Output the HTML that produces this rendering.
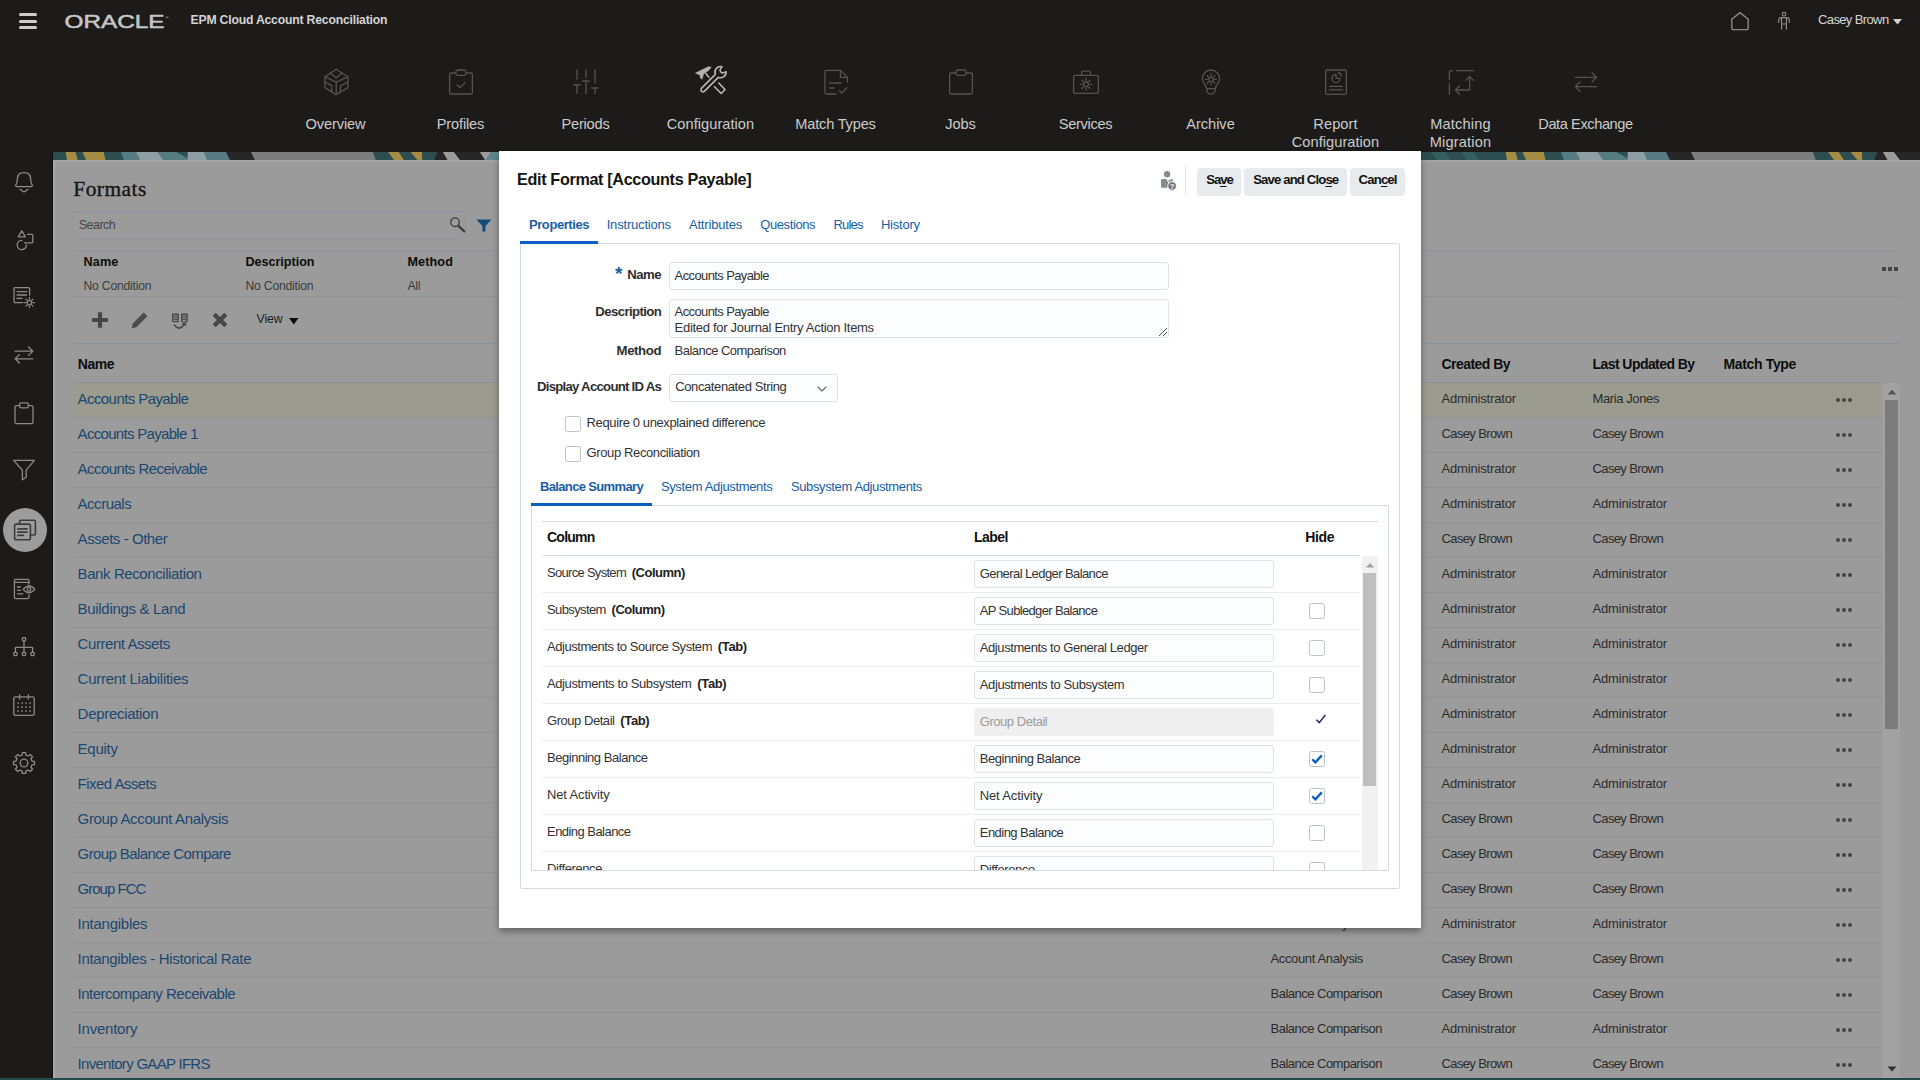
<!DOCTYPE html>
<html lang="en">
<head>
<meta charset="utf-8">
<title>EPM Cloud Account Reconciliation</title>
<style>
*{box-sizing:border-box;margin:0;padding:0}
html,body{width:1920px;height:1080px;overflow:hidden;background:#9b9b9b;font-family:"Liberation Sans",sans-serif;}
body{position:relative}
.abs{position:absolute}
svg{overflow:visible}
.t{position:absolute;white-space:pre;line-height:1;}
/* ===== header ===== */
#hdr{position:absolute;left:0;top:0;width:1920px;height:152px;background:#1d1b1a}
#side{position:absolute;left:0;top:152px;width:53px;height:928px;background:#1d1b1a}
#banner{position:absolute;left:53px;top:152px;width:1867px;height:8px;background:#2c4e50;overflow:hidden}
#botline{position:absolute;left:0;top:1078px;width:1920px;height:2px;background:#23494c}

#hdr .t{color:#cbcbcb}
.ni{fill:none;stroke:#555352;stroke-width:1.3;stroke-linecap:round;stroke-linejoin:round}
.ni.on{stroke:#bdbdbd;stroke-width:1.5}
.si{fill:none;stroke:#8a8a8a;stroke-width:1.3;stroke-linecap:round;stroke-linejoin:round}


#page .t{color:#2b2b2b}
#page .lk{color:#1c4770}
#page .hd{color:#0d0d0d}


#dlg{position:absolute;left:499px;top:151px;width:922px;height:777px;background:#fff;box-shadow:0 3px 7px rgba(0,0,0,.38)}
#dlg .t{color:#333}
.inp{position:absolute;border:1px solid #dde3e8;border-radius:3px;background:#fcfdfe}
.btn{position:absolute;background:#e8ebed;border-radius:4px}
.cb{position:absolute;width:15.5px;height:15.5px;border:1px solid #bcc2c7;border-radius:2.5px;background:#fff}
#dlg u{text-decoration-thickness:1px;text-underline-offset:1.5px}
.rl{position:absolute;height:1px;background:#e9edf0}

</style>
</head>
<body>
<div id="hdr">
<div class="abs" style="left:19px;top:13px;width:18px;height:3.2px;background:#cecece;border-radius:1.5px"></div>
<div class="abs" style="left:19px;top:19.5px;width:18px;height:3.2px;background:#cecece;border-radius:1.5px"></div>
<div class="abs" style="left:19px;top:26px;width:18px;height:3.2px;background:#cecece;border-radius:1.5px"></div>
<svg class="abs" style="left:64px;top:12px;" width="106" height="18" viewBox="0 0 106 18"><text x="0.5" y="16" font-family="Liberation Sans,sans-serif" font-size="18.2" fill="#c6c6c6" stroke="#c6c6c6" stroke-width="0.5" textLength="100" lengthAdjust="spacingAndGlyphs">ORACLE</text><text x="101.5" y="7" font-family="Liberation Sans,sans-serif" font-size="4" fill="#c9c9c9">®</text></svg>
<span class="t" style="left:190.50px;top:13.95px;font-size:12.2px;font-weight:700;color:#d4d4d4;letter-spacing:-0.184px;">EPM Cloud Account Reconciliation</span>
<svg class="abs" style="left:1729px;top:10px;" width="22" height="22" viewBox="0 0 22 22"><path class="ni" style="stroke:#8a8a8a;stroke-width:1.4" d="M2.8 9.2 L11 2.6 L19.2 9.2 V18.2 Q19.2 19.6 17.8 19.6 H4.2 Q2.8 19.6 2.8 18.2 Z"/></svg>
<svg class="abs" style="left:1776px;top:10px;" width="16" height="22" viewBox="0 0 16 22"><g class="ni" style="stroke:#8a8a8a;stroke-width:1.2"><circle cx="8" cy="4.2" r="1.8"/><path d="M2.8 12.5 V10 Q2.8 7.6 5.2 7.6 H10.8 Q13.2 7.6 13.2 10 V12.5"/><path d="M5.6 8 V19 M10.4 8 V19 M5.6 14 H10.4"/></g></svg>
<span class="t" style="left:1818.00px;top:13.05px;font-size:13px;color:#d4d4d4;letter-spacing:-0.619px;">Casey Brown</span>
<svg class="abs" style="left:1893px;top:18.6px;" width="9" height="6" viewBox="0 0 9 6"><path d="M0 0 H9 L4.5 5.6 Z" fill="#d0d0d0"/></svg>
<span class="t" style="left:305.50px;top:116.75px;font-size:14.6px;letter-spacing:-0.106px;">Overview</span>
<svg class="abs" style="left:321.5px;top:68px;" width="28" height="28" viewBox="0 0 28 28"><g class="ni"><path d="M14.2 1.2 L25.9 8.8 V19.6 L14.2 26.6 L2.9 19.6 V8.8 Z"/><path d="M14.2 26.4 V14.2 L3.1 8.9 M14.2 14.2 L25.7 8.9"/><path d="M8.5 5 L14.2 9.9 L20 5"/><path d="M2.900 14.200 L8.600 17.200 Q9.800 17.800 9.800 19.200 V23.600 M25.900 14.200 L19.800 17.200 Q18.400 17.800 18.400 19.200 V23.600"/></g></svg>
<span class="t" style="left:436.75px;top:116.75px;font-size:14.6px;letter-spacing:-0.148px;">Profiles</span>
<svg class="abs" style="left:446.5px;top:68px;" width="28" height="28" viewBox="0 0 28 28"><g class="ni"><rect x="2.6" y="5" width="22.8" height="21" rx="1.6"/><rect x="9" y="2" width="10" height="5.4" rx="1.8" style="fill:#1d1b1a"/><path d="M10.2 17 L13 19.6 L18.4 14.4"/></g></svg>
<span class="t" style="left:561.50px;top:116.75px;font-size:14.6px;letter-spacing:-0.215px;">Periods</span>
<svg class="abs" style="left:571.5px;top:68px;" width="28" height="28" viewBox="0 0 28 28"><g class="ni"><path d="M5 2 V11 M5 17 V25.6 M1.8 17 H8.2 M14 2 V9 M14 13 V25.6 M10.8 13 H17.2 M23 2 V15 M23 20 V25.6 M19.8 20 H26.2"/></g></svg>
<span class="t" style="left:666.75px;top:116.75px;font-size:14.6px;letter-spacing:0.050px;">Configuration</span>
<svg class="abs" style="left:696.5px;top:68px;" width="28" height="28" viewBox="0 0 28 28"><g class="ni on"><g transform="translate(-1.5,-2)"><path d="M19.85 8.39 A5.6 5.6 0 0 1 26.45 0.79 L24.600 3.600 A2.900 2.900 0 0 0 27.600 6.900 L30.580 5.710 A5.600 5.600 0 0 1 22.810 11.350 L8.800 25.350 A2.100 2.100 0 0 1 5.850 22.390 Z"/><path d="M0.300 7 L12.400 1 L15.700 1 L12.800 4.700 L9.800 6.200 L8 8 L6.500 13.300 L4.600 11.400 L4.800 9.200 Z" style="fill:#b4b4b4;stroke-width:0.6"/><path d="M10 7 L13.500 11.400"/><path d="M19 20.800 L25.700 27.500 L29.500 23.500 L23.300 17"/></g></g></svg>
<span class="t" style="left:795.25px;top:116.75px;font-size:14.6px;letter-spacing:-0.182px;">Match Types</span>
<svg class="abs" style="left:821.5px;top:68px;" width="28" height="28" viewBox="0 0 28 28"><g class="ni"><path d="M25.4 14 V9.4 L18.4 2.4 H4.6 Q3 2.4 3 4 V24.4 Q3 26 4.6 26 H14"/><path d="M18.4 2.6 V9.4 H25.2"/><path d="M7.4 15 H19 M7.4 20 H12"/><path d="M17.2 22.4 L19.8 25 L25 19.6"/></g></svg>
<span class="t" style="left:945.25px;top:116.75px;font-size:14.6px;letter-spacing:-0.085px;">Jobs</span>
<svg class="abs" style="left:946.5px;top:68px;" width="28" height="28" viewBox="0 0 28 28"><g class="ni"><rect x="2.6" y="5" width="22.8" height="21" rx="1.6"/><rect x="9" y="2" width="10" height="5.4" rx="1.8" style="fill:#1d1b1a"/></g></svg>
<span class="t" style="left:1058.75px;top:116.75px;font-size:14.6px;letter-spacing:-0.310px;">Services</span>
<svg class="abs" style="left:1071.5px;top:68px;" width="28" height="28" viewBox="0 0 28 28"><g class="ni"><rect x="1.6" y="7.4" width="24.8" height="18" rx="1.6"/><path d="M9.6 7.2 V4.4 Q9.6 3.2 10.8 3.2 H17.2 Q18.4 3.2 18.4 4.4 V7.2"/><circle cx="14" cy="16.4" r="2.4"/><path d="M14 10.6 V12.4 M14 20.4 V22.2 M8.2 16.4 H10 M18 16.4 H19.8 M9.9 12.3 L11.2 13.6 M16.8 19.2 L18.1 20.5 M18.1 12.3 L16.8 13.6 M11.2 19.2 L9.9 20.5"/></g></svg>
<span class="t" style="left:1186.25px;top:116.75px;font-size:14.6px;letter-spacing:-0.026px;">Archive</span>
<svg class="abs" style="left:1196.5px;top:68px;" width="28" height="28" viewBox="0 0 28 28"><g class="ni"><path d="M9.6 20.6 Q9.2 18 7.2 15.6 Q5.4 13.2 5.4 10.6 Q5.4 6.8 8 4.4 Q10.6 2 14 2 Q17.400 2 20 4.4 Q22.6 6.800 22.6 10.6 Q22.6 13.2 20.8 15.6 Q18.8 18 18.4 20.6 Z"/><path d="M9.800 21 Q10 26.200 14 26.200 Q18 26.200 18.200 21"/><circle cx="14" cy="11.4" r="2.3"/><path d="M14 6 V7.600 M14 15.2 V16.8 M8.600 11.4 H10.200 M17.800 11.4 H19.400 M10.200 7.600 L11.300 8.700 M16.700 14.100 L17.800 15.200 M17.800 7.600 L16.700 8.700 M11.300 14.100 L10.200 15.200"/></g></svg>
<span class="t" style="left:1313.25px;top:116.75px;font-size:14.6px;letter-spacing:0.113px;">Report</span>
<span class="t" style="left:1291.75px;top:134.75px;font-size:14.6px;letter-spacing:0.050px;">Configuration</span>
<svg class="abs" style="left:1321.5px;top:68px;" width="28" height="28" viewBox="0 0 28 28"><g class="ni"><rect x="3.6" y="2" width="20.800" height="24.400" rx="1.600"/><path d="M14 6.400 A4 4 0 1 0 18 10.400 H14 Z"/><path d="M16.400 5 A3.2 3.2 0 0 1 19.400 8"/><path d="M7.600 18.400 H20.400 M7.600 21.800 H20.400"/></g></svg>
<span class="t" style="left:1430.25px;top:116.75px;font-size:14.6px;letter-spacing:0.157px;">Matching</span>
<span class="t" style="left:1429.75px;top:134.75px;font-size:14.6px;letter-spacing:0.161px;">Migration</span>
<svg class="abs" style="left:1446.5px;top:68px;" width="28" height="28" viewBox="0 0 28 28"><g class="ni"><path d="M2.400 26 V15.6 M2.400 11.6 V4 Q2.400 2.600 3.800 2.600 H5.800 M9.600 2.600 H26.400"/><path d="M22.600 9.600 V22 H8.800"/><path d="M18.800 12.400 L22.600 8.400 L26.400 12.400"/><path d="M12.400 18 L8.400 22 L12.400 26"/></g></svg>
<span class="t" style="left:1538.25px;top:116.75px;font-size:14.6px;letter-spacing:-0.410px;">Data Exchange</span>
<svg class="abs" style="left:1571.5px;top:68px;" width="28" height="28" viewBox="0 0 28 28"><g class="ni"><path d="M3.400 9.400 H24.400 M20 4.800 L24.600 9.400 L20 14"/><path d="M24.600 18.600 H3.600 M8 14 L3.400 18.600 L8 23.200"/></g></svg>

</div>
<div id="side">
<svg class="abs" style="left:12px;top:17.5px;" width="24" height="24" viewBox="0 0 24 24"><g class="si" ><path d="M4 14.6 Q3 16.6 4.8 16.6 H19.2 Q21 16.6 20 14.6 Q18.6 12.4 18.6 8.4 Q18.2 2.6 12 2.6 Q5.8 2.6 5.400 8.4 Q5.400 12.4 4 14.6 Z"/><path d="M8.2 19.6 L12 22 L15.800 19.600"/></g></svg>
<svg class="abs" style="left:12px;top:76px;" width="24" height="24" viewBox="0 0 24 24"><g class="si" ><path d="M9.8 2.8 L13.4 8.800 H6.200 Z"/><path d="M15.400 6.400 H19.800 Q20.800 6.400 20.800 7.400 V13.800 Q20.800 14.800 19.800 14.800 H12.400"/><path d="M14.400 17 A4.600 4.600 0 1 1 9.800 12.400"/></g></svg>
<svg class="abs" style="left:12px;top:133px;" width="24" height="24" viewBox="0 0 24 24"><g class="si" ><path d="M17.600 10 V3.800 Q17.600 2.600 16.400 2.600 H3.200 Q2 2.600 2 3.800 V16.400 Q2 17.600 3.200 17.600 H10.800"/><path d="M5 6.600 H14.600 M5 10 H14.600 M5 13.400 H10"/><circle cx="17.400" cy="17.600" r="2.200"/><path d="M17.400 12.600 V14 M17.400 21.200 V22.600 M12.400 17.600 H13.800 M21 17.600 H22.400 M13.900 14.100 L14.900 15.100 M19.900 20.100 L20.900 21.100 M20.900 14.100 L19.900 15.100 M14.900 20.100 L13.900 21.100"/></g></svg>
<svg class="abs" style="left:12px;top:191px;" width="24" height="24" viewBox="0 0 24 24"><g class="si" ><path d="M3.200 8.200 H20.600 M16.600 4 L20.800 8.200 L16.600 12.400"/><path d="M20.800 15.800 H3.400 M7.400 11.600 L3.200 15.800 L7.400 20"/></g></svg>
<svg class="abs" style="left:12px;top:249px;" width="24" height="24" viewBox="0 0 24 24"><g class="si" ><rect x="3" y="4.600" width="18" height="18" rx="1.600"/><rect x="7.600" y="1.800" width="8.800" height="5" rx="1.600" style="fill:#1d1b1a"/></g></svg>
<svg class="abs" style="left:12px;top:306px;" width="24" height="24" viewBox="0 0 24 24"><g class="si" ><path d="M1.600 2.400 H22.400 L14.200 12.200 V19.200 L10.400 21.800 V12.200 Z"/></g></svg>
<div class="abs" style="left:2.6px;top:355.6px;width:44.8px;height:44.8px;border-radius:50%;background:#9c9c9c"></div>
<svg class="abs" style="left:11.7px;top:365.20000000000005px;" width="26" height="26" viewBox="0 0 24 24"><g class="si" style="stroke:#3c3c3c;stroke-width:1.5"><rect x="2.400" y="6.600" width="14.600" height="14.400" rx="1.600"/><path d="M7 6.400 V4.200 Q7 3 8.200 3 H20.400 Q21.600 3 21.600 4.200 V15.400 Q21.600 16.600 20.400 16.600 H17.200"/><path d="M5.400 11 H14 M5.400 14 H14 M5.400 17 H10.600"/></g></svg>
<svg class="abs" style="left:12px;top:425px;" width="24" height="24" viewBox="0 0 24 24"><g class="si" ><path d="M17 7 V3.800 Q17 2.400 15.600 2.400 H3.800 Q2.400 2.400 2.400 3.800 V20.200 Q2.400 21.600 3.800 21.600 H15.600 Q17 21.600 17 20.200 V17.600"/><path d="M2.600 5.400 H16.800"/><path d="M5.400 10 H8.400 M5.400 13.400 H8.400 M5.400 16.800 H11"/><path d="M11.200 12.400 Q14 9 17 9 Q20 9 22.800 12.400 Q20 15.800 17 15.800 Q14 15.800 11.200 12.400 Z"/><circle cx="17" cy="12.400" r="1.800"/></g></svg>
<svg class="abs" style="left:12px;top:483px;" width="24" height="24" viewBox="0 0 24 24"><g class="si" ><rect x="10.400" y="2.600" width="3.200" height="3.200" rx="0.800"/><rect x="1.800" y="17.400" width="3.200" height="3.200" rx="0.800"/><rect x="10.400" y="17.400" width="3.200" height="3.200" rx="0.800"/><rect x="19" y="17.400" width="3.200" height="3.200" rx="0.800"/><path d="M12 6 V17.200 M3.400 17.200 V12.400 H20.600 V17.200"/></g></svg>
<svg class="abs" style="left:12px;top:541px;" width="24" height="24" viewBox="0 0 24 24"><g class="si" ><rect x="1.800" y="3.800" width="20.400" height="18.600" rx="1.600"/><path d="M7.600 1.600 V6 M16.400 1.600 V6"/><rect x="5.4" y="9.4" width="1.400" height="1.400" style="fill:#9c9c9c;stroke:none"/><rect x="9.4" y="9.4" width="1.400" height="1.400" style="fill:#9c9c9c;stroke:none"/><rect x="13.4" y="9.4" width="1.400" height="1.400" style="fill:#9c9c9c;stroke:none"/><rect x="17.4" y="9.4" width="1.400" height="1.400" style="fill:#9c9c9c;stroke:none"/><rect x="5.4" y="13.4" width="1.400" height="1.400" style="fill:#9c9c9c;stroke:none"/><rect x="9.4" y="13.4" width="1.400" height="1.400" style="fill:#9c9c9c;stroke:none"/><rect x="13.4" y="13.4" width="1.400" height="1.400" style="fill:#9c9c9c;stroke:none"/><rect x="17.4" y="13.4" width="1.400" height="1.400" style="fill:#9c9c9c;stroke:none"/><rect x="5.4" y="17.4" width="1.400" height="1.400" style="fill:#9c9c9c;stroke:none"/><rect x="9.4" y="17.4" width="1.400" height="1.400" style="fill:#9c9c9c;stroke:none"/><rect x="13.4" y="17.4" width="1.400" height="1.400" style="fill:#9c9c9c;stroke:none"/><rect x="17.4" y="17.4" width="1.400" height="1.400" style="fill:#9c9c9c;stroke:none"/></g></svg>
<svg class="abs" style="left:12px;top:599px;" width="24" height="24" viewBox="0 0 24 24"><g class="si" ><path d="M22.47 10.34 L22.47 13.66 L19.97 13.91 L18.99 16.28 L20.58 18.23 L18.23 20.58 L16.28 18.99 L13.91 19.97 L13.66 22.47 L10.34 22.47 L10.09 19.97 L7.72 18.99 L5.77 20.58 L3.42 18.23 L5.01 16.28 L4.03 13.91 L1.53 13.66 L1.53 10.34 L4.03 10.09 L5.01 7.72 L3.42 5.77 L5.77 3.42 L7.72 5.01 L10.09 4.03 L10.34 1.53 L13.66 1.53 L13.91 4.03 L16.28 5.01 L18.23 3.42 L20.58 5.77 L18.99 7.72 L19.97 10.09 Z"/><circle cx="12" cy="12" r="3.800"/></g></svg>
<div class="abs" style="left:51.5px;top:0px;width:1.5px;height:928px;background:#110f0e"></div>
<div class="abs" style="left:53px;top:8px;width:2px;height:920px;background:#aaa"></div>

</div>
<div id="banner"><svg width="1867" height="8" viewBox="0 0 1867 8" style="display:block"><polygon fill="#2c4e50" points="0.0,0 12.6,0 14.0,8 0.0,8"/><polygon fill="#a68c42" points="12.6,0 22.6,0 25.0,8 14.0,8"/><polygon fill="#2c4e50" points="22.6,0 29.5,0 33.0,8 25.0,8"/><polygon fill="#a68c42" points="29.5,0 50.8,0 52.6,8 33.0,8"/><polygon fill="#2c4e50" points="50.8,0 68.0,0 71.0,8 52.6,8"/><polygon fill="#567b80" points="68.0,0 83.0,0 87.0,8 71.0,8"/><polygon fill="#8f9ea2" points="83.0,0 104.5,0 110.8,8 87.0,8"/><polygon fill="#567b80" points="104.5,0 134.5,0 134.5,8 110.8,8"/><polygon fill="#8f9ea2" points="134.5,0 151.0,0 154.5,8 134.5,8"/><polygon fill="#567b80" points="151.0,0 173.0,0 177.0,8 154.5,8"/><polygon fill="#262626" points="173.0,0 198.0,0 202.0,8 177.0,8"/><polygon fill="#7c7c7c" points="198.0,0 320.0,0 323.0,8 202.0,8"/><polygon fill="#2c4e50" points="320.0,0 335.0,0 341.0,8 323.0,8"/><polygon fill="#a68c42" points="335.0,0 346.0,0 351.0,8 341.0,8"/><polygon fill="#2c4e50" points="346.0,0 357.6,0 364.5,8 351.0,8"/><polygon fill="#a68c42" points="357.6,0 369.0,0 369.5,8 364.5,8"/><polygon fill="#2c4e50" points="369.0,0 384.5,0 381.0,8 369.5,8"/><polygon fill="#262626" points="384.5,0 390.0,0 394.5,8 381.0,8"/><polygon fill="#9b9b9b" points="390.0,0 401.0,0 407.0,8 394.5,8"/><polygon fill="#262626" points="401.0,0 427.0,0 432.0,8 407.0,8"/><polygon fill="#9b9b9b" points="427.0,0 438.0,0 433.0,8 432.0,8"/><polygon fill="#5d878c" points="438.0,0 470.0,0 470.0,8 433.0,8"/><polygon fill="#375d61" points="1378.0,0 1392.0,0 1398.0,8 1384.0,8"/><polygon fill="#375d61" points="1408.0,0 1420.0,0 1426.0,8 1414.0,8"/><polygon fill="#2c4e50" points="123,0 134.5,0 134.5,6"/><polygon fill="#2c4e50" points="1440.0,0 1452.6,0 1454.0,8 1440.0,8"/><polygon fill="#a68c42" points="1452.6,0 1462.6,0 1465.0,8 1454.0,8"/><polygon fill="#2c4e50" points="1462.6,0 1469.5,0 1473.0,8 1465.0,8"/><polygon fill="#a68c42" points="1469.5,0 1490.8,0 1492.6,8 1473.0,8"/><polygon fill="#2c4e50" points="1490.8,0 1508.0,0 1511.0,8 1492.6,8"/><polygon fill="#567b80" points="1508.0,0 1523.0,0 1527.0,8 1511.0,8"/><polygon fill="#8f9ea2" points="1523.0,0 1544.5,0 1550.8,8 1527.0,8"/><polygon fill="#567b80" points="1544.5,0 1574.5,0 1574.5,8 1550.8,8"/><polygon fill="#8f9ea2" points="1574.5,0 1591.0,0 1594.5,8 1574.5,8"/><polygon fill="#567b80" points="1591.0,0 1613.0,0 1617.0,8 1594.5,8"/><polygon fill="#262626" points="1613.0,0 1638.0,0 1642.0,8 1617.0,8"/><polygon fill="#7c7c7c" points="1638.0,0 1760.0,0 1763.0,8 1642.0,8"/><polygon fill="#2c4e50" points="1760.0,0 1775.0,0 1781.0,8 1763.0,8"/><polygon fill="#a68c42" points="1775.0,0 1786.0,0 1791.0,8 1781.0,8"/><polygon fill="#2c4e50" points="1786.0,0 1797.6,0 1804.5,8 1791.0,8"/><polygon fill="#a68c42" points="1797.6,0 1809.0,0 1809.5,8 1804.5,8"/><polygon fill="#2c4e50" points="1809.0,0 1824.5,0 1821.0,8 1809.5,8"/><polygon fill="#262626" points="1824.5,0 1830.0,0 1834.5,8 1821.0,8"/><polygon fill="#9b9b9b" points="1830.0,0 1841.0,0 1847.0,8 1834.5,8"/><polygon fill="#262626" points="1841.0,0 1867.0,0 1872.0,8 1847.0,8"/><polygon fill="#9b9b9b" points="1867.0,0 1878.0,0 1873.0,8 1872.0,8"/><polygon fill="#5d878c" points="1878.0,0 1910.0,0 1910.0,8 1873.0,8"/><polygon fill="#375d61" points="2818.0,0 2832.0,0 2838.0,8 2824.0,8"/><polygon fill="#375d61" points="2848.0,0 2860.0,0 2866.0,8 2854.0,8"/><polygon fill="#2c4e50" points="1563,0 1574.5,0 1574.5,6"/></svg></div>
<div id="page">
<div class="abs" style="left:55px;top:160px;width:1865px;height:2px;background:#a5a5a5"></div>
<span class="t" style="left:73.30px;top:179.35px;font-size:21.4px;color:#161616;letter-spacing:0.479px;font-family:'Liberation Serif',serif;-webkit-text-stroke:0.35px #161616;">Formats</span>
<div class="abs" style="left:73px;top:211px;width:393px;height:27.5px;border:1px solid #8c949b;border-radius:3px"></div>
<span class="t" style="left:78.80px;top:218.85px;font-size:12.4px;color:#454545;letter-spacing:-0.465px;">Search</span>
<svg class="abs" style="left:447px;top:215px;" width="20" height="20" viewBox="0 0 20 20"><circle cx="8" cy="7.2" r="4.3" fill="none" stroke="#3d3d3d" stroke-width="1.3"/><path d="M11.2 10.6 L17.2 16.400" stroke="#3d3d3d" stroke-width="2.2" stroke-linecap="round"/></svg>
<svg class="abs" style="left:476px;top:218.5px;" width="16" height="13" viewBox="0 0 16 13"><path d="M0.400 0.400 H15.400 L9.400 7 V12.400 H6.400 V7 Z" fill="#0e4b7c"/></svg>
<div class="abs" style="left:73px;top:250px;width:1827px;height:1px;background:#8d9398"></div>
<span class="t" style="left:83.50px;top:255.75px;font-size:12.6px;font-weight:700;color:#0d0d0d;letter-spacing:0.171px;">Name</span>
<span class="t" style="left:83.50px;top:279.95px;font-size:12.2px;color:#3b3b3b;letter-spacing:-0.211px;">No Condition</span>
<span class="t" style="left:245.50px;top:255.75px;font-size:12.6px;font-weight:700;color:#0d0d0d;letter-spacing:-0.028px;">Description</span>
<span class="t" style="left:245.50px;top:279.95px;font-size:12.2px;color:#3b3b3b;letter-spacing:-0.211px;">No Condition</span>
<span class="t" style="left:407.50px;top:255.75px;font-size:12.6px;font-weight:700;color:#0d0d0d;letter-spacing:0.118px;">Method</span>
<span class="t" style="left:407.50px;top:279.95px;font-size:12.2px;color:#3b3b3b;letter-spacing:-0.353px;">All</span>
<div class="abs" style="left:73px;top:296px;width:1827px;height:1px;background:#8d9195"></div>
<div class="abs" style="left:1882px;top:267px;width:4px;height:4px;background:#454545"></div>
<div class="abs" style="left:1888px;top:267px;width:4px;height:4px;background:#454545"></div>
<div class="abs" style="left:1894px;top:267px;width:4px;height:4px;background:#454545"></div>
<svg class="abs" style="left:91px;top:311px;" width="18" height="18" viewBox="0 0 18 18"><path d="M9 1.200 V16.800 M1.200 9 H16.800" stroke="#474747" stroke-width="4.200" stroke-linecap="butt"/></svg>
<svg class="abs" style="left:131px;top:311px;" width="18" height="18" viewBox="0 0 18 18"><path d="M12.600 1.400 L16.400 5.200 L5.400 16.200 L0.800 17.200 L1.800 12.400 Z" fill="#4b4b4b"/></svg>
<svg class="abs" style="left:171px;top:311.5px;" width="18" height="18" viewBox="0 0 18 18"><rect x="1" y="1.500" width="6.800" height="8.800" rx="0.800" fill="#474747"/><rect x="10" y="1.500" width="6.800" height="8.800" rx="0.800" fill="#474747"/><rect x="2" y="3.4" width="4.600" height="1" fill="#9b9b9b"/><rect x="2" y="5.6" width="4.600" height="1" fill="#9b9b9b"/><rect x="2" y="7.8" width="4.600" height="1" fill="#9b9b9b"/><rect x="11" y="3.4" width="4.600" height="1" fill="#9b9b9b"/><rect x="11" y="5.6" width="4.600" height="1" fill="#9b9b9b"/><rect x="11" y="7.8" width="4.600" height="1" fill="#9b9b9b"/><path d="M3.400 13 Q8.400 19.500 13 12.400" fill="none" stroke="#474747" stroke-width="1.600" stroke-linecap="round"/><path d="M10.600 11.400 L14.800 9.600 L15.400 14.400 Z" fill="#474747"/><path d="M11.800 9.200 L14.600 10.600" stroke="#9b9b9b" stroke-width="0.800"/></svg>
<svg class="abs" style="left:212px;top:312px;" width="16" height="16" viewBox="0 0 16 16"><path d="M2.200 2.200 L13.800 13.800 M13.800 2.200 L2.200 13.800" stroke="#474747" stroke-width="4.400" stroke-linecap="butt"/></svg>
<span class="t" style="left:256.60px;top:312.85px;font-size:12.4px;color:#1e1e1e;letter-spacing:-0.163px;">View</span>
<svg class="abs" style="left:288.6px;top:317.6px;" width="10" height="7" viewBox="0 0 10 7"><path d="M0 0 H9.600 L4.800 6.600 Z" fill="#0c0c0c"/></svg>
<div class="abs" style="left:73px;top:343px;width:1827px;height:1px;background:#899198"></div>
<span class="t hd" style="left:77.80px;top:357.05px;font-size:14px;font-weight:700;letter-spacing:-0.483px;">Name</span>
<span class="t hd" style="left:1441.50px;top:357.05px;font-size:14px;font-weight:700;letter-spacing:-0.542px;">Created By</span>
<span class="t hd" style="left:1592.50px;top:357.05px;font-size:14px;font-weight:700;letter-spacing:-0.564px;">Last Updated By</span>
<span class="t hd" style="left:1723.50px;top:357.05px;font-size:14px;font-weight:700;letter-spacing:-0.348px;">Match Type</span>
<div class="abs" style="left:73px;top:382px;width:1808px;height:1px;background:#899198"></div>
<div class="abs" style="left:73px;top:383px;width:1808px;height:34px;background:#9b9b8f"></div>
<span class="t lk" style="left:77.60px;top:391.05px;font-size:15px;letter-spacing:-0.580px;">Accounts Payable</span>
<span class="t c" style="left:1270.50px;top:392.05px;font-size:13px;letter-spacing:-0.510px;">Balance Comparison</span>
<span class="t" style="left:1441.50px;top:392.05px;font-size:13px;letter-spacing:-0.160px;">Administrator</span>
<span class="t" style="left:1592.50px;top:392.05px;font-size:13px;letter-spacing:-0.392px;">Maria Jones</span>
<div class="abs" style="left:1836.2px;top:398.3px;width:3.8px;height:3.8px;background:#444;border-radius:50%"></div>
<div class="abs" style="left:1842.0px;top:398.3px;width:3.8px;height:3.8px;background:#444;border-radius:50%"></div>
<div class="abs" style="left:1847.8px;top:398.3px;width:3.8px;height:3.8px;background:#444;border-radius:50%"></div>
<div class="abs" style="left:73px;top:417px;width:1808px;height:1px;background:#909498"></div>
<span class="t lk" style="left:77.60px;top:426.05px;font-size:15px;letter-spacing:-0.688px;">Accounts Payable 1</span>
<span class="t c" style="left:1270.50px;top:427.05px;font-size:13px;letter-spacing:-0.510px;">Balance Comparison</span>
<span class="t" style="left:1441.50px;top:427.05px;font-size:13px;letter-spacing:-0.619px;">Casey Brown</span>
<span class="t" style="left:1592.50px;top:427.05px;font-size:13px;letter-spacing:-0.619px;">Casey Brown</span>
<div class="abs" style="left:1836.2px;top:433.3px;width:3.8px;height:3.8px;background:#444;border-radius:50%"></div>
<div class="abs" style="left:1842.0px;top:433.3px;width:3.8px;height:3.8px;background:#444;border-radius:50%"></div>
<div class="abs" style="left:1847.8px;top:433.3px;width:3.8px;height:3.8px;background:#444;border-radius:50%"></div>
<div class="abs" style="left:73px;top:452px;width:1808px;height:1px;background:#909498"></div>
<span class="t lk" style="left:77.60px;top:461.05px;font-size:15px;letter-spacing:-0.562px;">Accounts Receivable</span>
<span class="t c" style="left:1270.50px;top:462.05px;font-size:13px;letter-spacing:-0.510px;">Balance Comparison</span>
<span class="t" style="left:1441.50px;top:462.05px;font-size:13px;letter-spacing:-0.160px;">Administrator</span>
<span class="t" style="left:1592.50px;top:462.05px;font-size:13px;letter-spacing:-0.619px;">Casey Brown</span>
<div class="abs" style="left:1836.2px;top:468.3px;width:3.8px;height:3.8px;background:#444;border-radius:50%"></div>
<div class="abs" style="left:1842.0px;top:468.3px;width:3.8px;height:3.8px;background:#444;border-radius:50%"></div>
<div class="abs" style="left:1847.8px;top:468.3px;width:3.8px;height:3.8px;background:#444;border-radius:50%"></div>
<div class="abs" style="left:73px;top:487px;width:1808px;height:1px;background:#909498"></div>
<span class="t lk" style="left:77.60px;top:496.05px;font-size:15px;letter-spacing:-0.490px;">Accruals</span>
<span class="t c" style="left:1270.50px;top:497.05px;font-size:13px;letter-spacing:-0.361px;">Account Analysis</span>
<span class="t" style="left:1441.50px;top:497.05px;font-size:13px;letter-spacing:-0.160px;">Administrator</span>
<span class="t" style="left:1592.50px;top:497.05px;font-size:13px;letter-spacing:-0.160px;">Administrator</span>
<div class="abs" style="left:1836.2px;top:503.3px;width:3.8px;height:3.8px;background:#444;border-radius:50%"></div>
<div class="abs" style="left:1842.0px;top:503.3px;width:3.8px;height:3.8px;background:#444;border-radius:50%"></div>
<div class="abs" style="left:1847.8px;top:503.3px;width:3.8px;height:3.8px;background:#444;border-radius:50%"></div>
<div class="abs" style="left:73px;top:522px;width:1808px;height:1px;background:#909498"></div>
<span class="t lk" style="left:77.60px;top:531.05px;font-size:15px;letter-spacing:-0.447px;">Assets - Other</span>
<span class="t c" style="left:1270.50px;top:532.05px;font-size:13px;letter-spacing:-0.361px;">Account Analysis</span>
<span class="t" style="left:1441.50px;top:532.05px;font-size:13px;letter-spacing:-0.619px;">Casey Brown</span>
<span class="t" style="left:1592.50px;top:532.05px;font-size:13px;letter-spacing:-0.619px;">Casey Brown</span>
<div class="abs" style="left:1836.2px;top:538.3px;width:3.8px;height:3.8px;background:#444;border-radius:50%"></div>
<div class="abs" style="left:1842.0px;top:538.3px;width:3.8px;height:3.8px;background:#444;border-radius:50%"></div>
<div class="abs" style="left:1847.8px;top:538.3px;width:3.8px;height:3.8px;background:#444;border-radius:50%"></div>
<div class="abs" style="left:73px;top:557px;width:1808px;height:1px;background:#909498"></div>
<span class="t lk" style="left:77.60px;top:566.05px;font-size:15px;letter-spacing:-0.413px;">Bank Reconciliation</span>
<span class="t c" style="left:1270.50px;top:567.05px;font-size:13px;letter-spacing:-0.510px;">Balance Comparison</span>
<span class="t" style="left:1441.50px;top:567.05px;font-size:13px;letter-spacing:-0.160px;">Administrator</span>
<span class="t" style="left:1592.50px;top:567.05px;font-size:13px;letter-spacing:-0.160px;">Administrator</span>
<div class="abs" style="left:1836.2px;top:573.3px;width:3.8px;height:3.8px;background:#444;border-radius:50%"></div>
<div class="abs" style="left:1842.0px;top:573.3px;width:3.8px;height:3.8px;background:#444;border-radius:50%"></div>
<div class="abs" style="left:1847.8px;top:573.3px;width:3.8px;height:3.8px;background:#444;border-radius:50%"></div>
<div class="abs" style="left:73px;top:592px;width:1808px;height:1px;background:#909498"></div>
<span class="t lk" style="left:77.60px;top:601.05px;font-size:15px;letter-spacing:-0.311px;">Buildings &amp; Land</span>
<span class="t c" style="left:1270.50px;top:602.05px;font-size:13px;letter-spacing:-0.361px;">Account Analysis</span>
<span class="t" style="left:1441.50px;top:602.05px;font-size:13px;letter-spacing:-0.160px;">Administrator</span>
<span class="t" style="left:1592.50px;top:602.05px;font-size:13px;letter-spacing:-0.160px;">Administrator</span>
<div class="abs" style="left:1836.2px;top:608.3px;width:3.8px;height:3.8px;background:#444;border-radius:50%"></div>
<div class="abs" style="left:1842.0px;top:608.3px;width:3.8px;height:3.8px;background:#444;border-radius:50%"></div>
<div class="abs" style="left:1847.8px;top:608.3px;width:3.8px;height:3.8px;background:#444;border-radius:50%"></div>
<div class="abs" style="left:73px;top:627px;width:1808px;height:1px;background:#909498"></div>
<span class="t lk" style="left:77.60px;top:636.05px;font-size:15px;letter-spacing:-0.441px;">Current Assets</span>
<span class="t c" style="left:1270.50px;top:637.05px;font-size:13px;letter-spacing:-0.361px;">Account Analysis</span>
<span class="t" style="left:1441.50px;top:637.05px;font-size:13px;letter-spacing:-0.160px;">Administrator</span>
<span class="t" style="left:1592.50px;top:637.05px;font-size:13px;letter-spacing:-0.160px;">Administrator</span>
<div class="abs" style="left:1836.2px;top:643.3px;width:3.8px;height:3.8px;background:#444;border-radius:50%"></div>
<div class="abs" style="left:1842.0px;top:643.3px;width:3.8px;height:3.8px;background:#444;border-radius:50%"></div>
<div class="abs" style="left:1847.8px;top:643.3px;width:3.8px;height:3.8px;background:#444;border-radius:50%"></div>
<div class="abs" style="left:73px;top:662px;width:1808px;height:1px;background:#909498"></div>
<span class="t lk" style="left:77.60px;top:671.05px;font-size:15px;letter-spacing:-0.278px;">Current Liabilities</span>
<span class="t c" style="left:1270.50px;top:672.05px;font-size:13px;letter-spacing:-0.361px;">Account Analysis</span>
<span class="t" style="left:1441.50px;top:672.05px;font-size:13px;letter-spacing:-0.160px;">Administrator</span>
<span class="t" style="left:1592.50px;top:672.05px;font-size:13px;letter-spacing:-0.160px;">Administrator</span>
<div class="abs" style="left:1836.2px;top:678.3px;width:3.8px;height:3.8px;background:#444;border-radius:50%"></div>
<div class="abs" style="left:1842.0px;top:678.3px;width:3.8px;height:3.8px;background:#444;border-radius:50%"></div>
<div class="abs" style="left:1847.8px;top:678.3px;width:3.8px;height:3.8px;background:#444;border-radius:50%"></div>
<div class="abs" style="left:73px;top:697px;width:1808px;height:1px;background:#909498"></div>
<span class="t lk" style="left:77.60px;top:706.05px;font-size:15px;letter-spacing:-0.301px;">Depreciation</span>
<span class="t c" style="left:1270.50px;top:707.05px;font-size:13px;letter-spacing:-0.361px;">Account Analysis</span>
<span class="t" style="left:1441.50px;top:707.05px;font-size:13px;letter-spacing:-0.160px;">Administrator</span>
<span class="t" style="left:1592.50px;top:707.05px;font-size:13px;letter-spacing:-0.160px;">Administrator</span>
<div class="abs" style="left:1836.2px;top:713.3px;width:3.8px;height:3.8px;background:#444;border-radius:50%"></div>
<div class="abs" style="left:1842.0px;top:713.3px;width:3.8px;height:3.8px;background:#444;border-radius:50%"></div>
<div class="abs" style="left:1847.8px;top:713.3px;width:3.8px;height:3.8px;background:#444;border-radius:50%"></div>
<div class="abs" style="left:73px;top:732px;width:1808px;height:1px;background:#909498"></div>
<span class="t lk" style="left:77.60px;top:741.05px;font-size:15px;letter-spacing:-0.248px;">Equity</span>
<span class="t c" style="left:1270.50px;top:742.05px;font-size:13px;letter-spacing:-0.361px;">Account Analysis</span>
<span class="t" style="left:1441.50px;top:742.05px;font-size:13px;letter-spacing:-0.160px;">Administrator</span>
<span class="t" style="left:1592.50px;top:742.05px;font-size:13px;letter-spacing:-0.160px;">Administrator</span>
<div class="abs" style="left:1836.2px;top:748.3px;width:3.8px;height:3.8px;background:#444;border-radius:50%"></div>
<div class="abs" style="left:1842.0px;top:748.3px;width:3.8px;height:3.8px;background:#444;border-radius:50%"></div>
<div class="abs" style="left:1847.8px;top:748.3px;width:3.8px;height:3.8px;background:#444;border-radius:50%"></div>
<div class="abs" style="left:73px;top:767px;width:1808px;height:1px;background:#909498"></div>
<span class="t lk" style="left:77.60px;top:776.05px;font-size:15px;letter-spacing:-0.536px;">Fixed Assets</span>
<span class="t c" style="left:1270.50px;top:777.05px;font-size:13px;letter-spacing:-0.361px;">Account Analysis</span>
<span class="t" style="left:1441.50px;top:777.05px;font-size:13px;letter-spacing:-0.160px;">Administrator</span>
<span class="t" style="left:1592.50px;top:777.05px;font-size:13px;letter-spacing:-0.160px;">Administrator</span>
<div class="abs" style="left:1836.2px;top:783.3px;width:3.8px;height:3.8px;background:#444;border-radius:50%"></div>
<div class="abs" style="left:1842.0px;top:783.3px;width:3.8px;height:3.8px;background:#444;border-radius:50%"></div>
<div class="abs" style="left:1847.8px;top:783.3px;width:3.8px;height:3.8px;background:#444;border-radius:50%"></div>
<div class="abs" style="left:73px;top:802px;width:1808px;height:1px;background:#909498"></div>
<span class="t lk" style="left:77.60px;top:811.05px;font-size:15px;letter-spacing:-0.360px;">Group Account Analysis</span>
<span class="t c" style="left:1270.50px;top:812.05px;font-size:13px;letter-spacing:-0.361px;">Account Analysis</span>
<span class="t" style="left:1441.50px;top:812.05px;font-size:13px;letter-spacing:-0.619px;">Casey Brown</span>
<span class="t" style="left:1592.50px;top:812.05px;font-size:13px;letter-spacing:-0.619px;">Casey Brown</span>
<div class="abs" style="left:1836.2px;top:818.3px;width:3.8px;height:3.8px;background:#444;border-radius:50%"></div>
<div class="abs" style="left:1842.0px;top:818.3px;width:3.8px;height:3.8px;background:#444;border-radius:50%"></div>
<div class="abs" style="left:1847.8px;top:818.3px;width:3.8px;height:3.8px;background:#444;border-radius:50%"></div>
<div class="abs" style="left:73px;top:837px;width:1808px;height:1px;background:#909498"></div>
<span class="t lk" style="left:77.60px;top:846.05px;font-size:15px;letter-spacing:-0.606px;">Group Balance Compare</span>
<span class="t c" style="left:1270.50px;top:847.05px;font-size:13px;letter-spacing:-0.510px;">Balance Comparison</span>
<span class="t" style="left:1441.50px;top:847.05px;font-size:13px;letter-spacing:-0.619px;">Casey Brown</span>
<span class="t" style="left:1592.50px;top:847.05px;font-size:13px;letter-spacing:-0.619px;">Casey Brown</span>
<div class="abs" style="left:1836.2px;top:853.3px;width:3.8px;height:3.8px;background:#444;border-radius:50%"></div>
<div class="abs" style="left:1842.0px;top:853.3px;width:3.8px;height:3.8px;background:#444;border-radius:50%"></div>
<div class="abs" style="left:1847.8px;top:853.3px;width:3.8px;height:3.8px;background:#444;border-radius:50%"></div>
<div class="abs" style="left:73px;top:872px;width:1808px;height:1px;background:#909498"></div>
<span class="t lk" style="left:77.60px;top:881.05px;font-size:15px;letter-spacing:-0.998px;">Group FCC</span>
<span class="t c" style="left:1270.50px;top:882.05px;font-size:13px;letter-spacing:-0.510px;">Balance Comparison</span>
<span class="t" style="left:1441.50px;top:882.05px;font-size:13px;letter-spacing:-0.619px;">Casey Brown</span>
<span class="t" style="left:1592.50px;top:882.05px;font-size:13px;letter-spacing:-0.619px;">Casey Brown</span>
<div class="abs" style="left:1836.2px;top:888.3px;width:3.8px;height:3.8px;background:#444;border-radius:50%"></div>
<div class="abs" style="left:1842.0px;top:888.3px;width:3.8px;height:3.8px;background:#444;border-radius:50%"></div>
<div class="abs" style="left:1847.8px;top:888.3px;width:3.8px;height:3.8px;background:#444;border-radius:50%"></div>
<div class="abs" style="left:73px;top:907px;width:1808px;height:1px;background:#909498"></div>
<span class="t lk" style="left:77.60px;top:916.05px;font-size:15px;letter-spacing:-0.259px;">Intangibles</span>
<span class="t c" style="left:1270.50px;top:917.05px;font-size:13px;letter-spacing:-0.361px;">Account Analysis</span>
<span class="t" style="left:1441.50px;top:917.05px;font-size:13px;letter-spacing:-0.160px;">Administrator</span>
<span class="t" style="left:1592.50px;top:917.05px;font-size:13px;letter-spacing:-0.160px;">Administrator</span>
<div class="abs" style="left:1836.2px;top:923.3px;width:3.8px;height:3.8px;background:#444;border-radius:50%"></div>
<div class="abs" style="left:1842.0px;top:923.3px;width:3.8px;height:3.8px;background:#444;border-radius:50%"></div>
<div class="abs" style="left:1847.8px;top:923.3px;width:3.8px;height:3.8px;background:#444;border-radius:50%"></div>
<div class="abs" style="left:73px;top:942px;width:1808px;height:1px;background:#909498"></div>
<span class="t lk" style="left:77.60px;top:951.05px;font-size:15px;letter-spacing:-0.338px;">Intangibles - Historical Rate</span>
<span class="t c" style="left:1270.50px;top:952.05px;font-size:13px;letter-spacing:-0.361px;">Account Analysis</span>
<span class="t" style="left:1441.50px;top:952.05px;font-size:13px;letter-spacing:-0.619px;">Casey Brown</span>
<span class="t" style="left:1592.50px;top:952.05px;font-size:13px;letter-spacing:-0.619px;">Casey Brown</span>
<div class="abs" style="left:1836.2px;top:958.3px;width:3.8px;height:3.8px;background:#444;border-radius:50%"></div>
<div class="abs" style="left:1842.0px;top:958.3px;width:3.8px;height:3.8px;background:#444;border-radius:50%"></div>
<div class="abs" style="left:1847.8px;top:958.3px;width:3.8px;height:3.8px;background:#444;border-radius:50%"></div>
<div class="abs" style="left:73px;top:977px;width:1808px;height:1px;background:#909498"></div>
<span class="t lk" style="left:77.60px;top:986.05px;font-size:15px;letter-spacing:-0.511px;">Intercompany Receivable</span>
<span class="t c" style="left:1270.50px;top:987.05px;font-size:13px;letter-spacing:-0.510px;">Balance Comparison</span>
<span class="t" style="left:1441.50px;top:987.05px;font-size:13px;letter-spacing:-0.619px;">Casey Brown</span>
<span class="t" style="left:1592.50px;top:987.05px;font-size:13px;letter-spacing:-0.619px;">Casey Brown</span>
<div class="abs" style="left:1836.2px;top:993.3px;width:3.8px;height:3.8px;background:#444;border-radius:50%"></div>
<div class="abs" style="left:1842.0px;top:993.3px;width:3.8px;height:3.8px;background:#444;border-radius:50%"></div>
<div class="abs" style="left:1847.8px;top:993.3px;width:3.8px;height:3.8px;background:#444;border-radius:50%"></div>
<div class="abs" style="left:73px;top:1012px;width:1808px;height:1px;background:#909498"></div>
<span class="t lk" style="left:77.60px;top:1021.05px;font-size:15px;letter-spacing:-0.222px;">Inventory</span>
<span class="t c" style="left:1270.50px;top:1022.05px;font-size:13px;letter-spacing:-0.510px;">Balance Comparison</span>
<span class="t" style="left:1441.50px;top:1022.05px;font-size:13px;letter-spacing:-0.160px;">Administrator</span>
<span class="t" style="left:1592.50px;top:1022.05px;font-size:13px;letter-spacing:-0.160px;">Administrator</span>
<div class="abs" style="left:1836.2px;top:1028.3px;width:3.8px;height:3.8px;background:#444;border-radius:50%"></div>
<div class="abs" style="left:1842.0px;top:1028.3px;width:3.8px;height:3.8px;background:#444;border-radius:50%"></div>
<div class="abs" style="left:1847.8px;top:1028.3px;width:3.8px;height:3.8px;background:#444;border-radius:50%"></div>
<div class="abs" style="left:73px;top:1047px;width:1808px;height:1px;background:#909498"></div>
<span class="t lk" style="left:77.60px;top:1056.05px;font-size:15px;letter-spacing:-0.706px;">Inventory GAAP IFRS</span>
<span class="t c" style="left:1270.50px;top:1057.05px;font-size:13px;letter-spacing:-0.510px;">Balance Comparison</span>
<span class="t" style="left:1441.50px;top:1057.05px;font-size:13px;letter-spacing:-0.619px;">Casey Brown</span>
<span class="t" style="left:1592.50px;top:1057.05px;font-size:13px;letter-spacing:-0.619px;">Casey Brown</span>
<div class="abs" style="left:1836.2px;top:1063.3px;width:3.8px;height:3.8px;background:#444;border-radius:50%"></div>
<div class="abs" style="left:1842.0px;top:1063.3px;width:3.8px;height:3.8px;background:#444;border-radius:50%"></div>
<div class="abs" style="left:1847.8px;top:1063.3px;width:3.8px;height:3.8px;background:#444;border-radius:50%"></div>
<div class="abs" style="left:73px;top:1082px;width:1808px;height:1px;background:#909498"></div>
<div class="abs" style="left:1883px;top:383px;width:16.5px;height:697px;background:#a2a2a2"></div>
<div class="abs" style="left:1885px;top:400px;width:12.5px;height:328.5px;background:#7c7c7c"></div>
<svg class="abs" style="left:1886.5px;top:388.5px;" width="10" height="6" viewBox="0 0 10 6"><path d="M0.500 5.500 L5 0.800 L9.500 5.500 Z" fill="#525252"/></svg>
<svg class="abs" style="left:1886.5px;top:1066px;" width="10" height="6" viewBox="0 0 10 6"><path d="M0.500 0.500 L5 5.500 L9.500 0.500 Z" fill="#333"/></svg>

</div>
<div id="dlg">
<span class="t" style="left:18.00px;top:19.95px;font-size:16.2px;font-weight:700;color:#141414;letter-spacing:-0.345px;">Edit Format [Accounts Payable]</span>
<svg class="abs" style="left:661px;top:19px;" width="18" height="22" viewBox="0 0 18 22"><circle cx="7.100" cy="4.300" r="3.200" fill="#858b8f"/><path d="M1 10.400 Q1 9 2.400 9 H5.600 Q6.600 9 7 10 L8.400 13.400 Q7.400 15 7.600 17.800 H2 Q1 17.800 1 16.800 Z" fill="#858b8f"/><path d="M8.200 10.800 Q9.600 9 13 9.200 V11.300 Q10.600 11 9.200 12.600 Z" fill="#858b8f"/><circle cx="12.100" cy="16" r="4.300" fill="#74797c" stroke="#fff" stroke-width="0.700"/><text x="12.100" y="18.500" font-family="Liberation Sans,sans-serif" font-size="7" font-weight="700" fill="#fff" text-anchor="middle">?</text></svg>
<div class="abs" style="left:686px;top:15px;width:1px;height:29px;background:#e4e7ea"></div>
<div class="abs btn" style="left:698px;top:17px;width:44px;height:27.8px;"></div>
<div class="abs btn" style="left:745px;top:17px;width:103px;height:27.8px;"></div>
<div class="abs btn" style="left:851px;top:17px;width:55px;height:27.8px;"></div>
<span class="t" style="left:707.20px;top:21.95px;font-size:13.2px;font-weight:700;color:#131313;letter-spacing:-1.082px;">Sa<u>v</u>e</span>
<span class="t" style="left:754.20px;top:21.95px;font-size:13.2px;font-weight:700;color:#131313;letter-spacing:-0.884px;">Save and Clo<u>s</u>e</span>
<span class="t" style="left:859.60px;top:21.95px;font-size:13.2px;font-weight:700;color:#131313;letter-spacing:-0.881px;">Can<u>c</u>el</span>
<span class="t" style="left:30.00px;top:67.05px;font-size:13px;font-weight:700;color:#1b5ea7;letter-spacing:-0.430px;">Properties</span>
<span class="t" style="left:107.70px;top:67.05px;font-size:13px;color:#175ea6;letter-spacing:-0.189px;">Instructions</span>
<span class="t" style="left:189.90px;top:67.05px;font-size:13px;color:#175ea6;letter-spacing:-0.171px;">Attributes</span>
<span class="t" style="left:261.20px;top:67.05px;font-size:13px;color:#175ea6;letter-spacing:-0.392px;">Questions</span>
<span class="t" style="left:334.40px;top:67.05px;font-size:13px;color:#175ea6;letter-spacing:-0.807px;">Rules</span>
<span class="t" style="left:381.90px;top:67.05px;font-size:13px;color:#175ea6;letter-spacing:-0.207px;">History</span>
<div class="abs" style="left:21px;top:92px;width:880px;height:645.5px;border:1px solid #d3dde5;border-radius:0 2px 2px 2px"></div>
<div class="abs" style="left:21px;top:89.5px;width:78px;height:3.5px;background:#0b5fc3"></div>
<span class="t" style="left:116.00px;top:113.05px;font-size:19px;font-weight:700;color:#1b5ea7;">*</span>
<span class="t" style="left:128.30px;top:116.95px;font-size:13.2px;font-weight:700;color:#2f2f2f;letter-spacing:-0.538px;">Name</span>
<div class="abs inp" style="left:170px;top:111px;width:500px;height:27.5px;"></div>
<span class="t" style="left:175.60px;top:118.05px;font-size:13px;letter-spacing:-0.616px;">Accounts Payable</span>
<span class="t" style="left:96.30px;top:153.95px;font-size:13.2px;font-weight:700;color:#2f2f2f;letter-spacing:-0.601px;">Description</span>
<div class="abs inp" style="left:170px;top:147.5px;width:500px;height:39px;"></div>
<span class="t" style="left:175.60px;top:154.05px;font-size:13px;letter-spacing:-0.616px;">Accounts Payable</span>
<span class="t" style="left:175.60px;top:170.05px;font-size:13px;letter-spacing:-0.299px;">Edited for Journal Entry Action Items</span>
<svg class="abs" style="left:658.5px;top:175.5px;" width="10" height="10" viewBox="0 0 10 10"><path d="M1 9 L9 1 M5 9 L9 5" stroke="#555" stroke-width="1" /></svg>
<span class="t" style="left:117.60px;top:192.95px;font-size:13.2px;font-weight:700;color:#2f2f2f;letter-spacing:-0.404px;">Method</span>
<span class="t" style="left:175.60px;top:193.05px;font-size:13px;letter-spacing:-0.526px;">Balance Comparison</span>
<span class="t" style="left:38.00px;top:228.95px;font-size:13.2px;font-weight:700;color:#2f2f2f;letter-spacing:-0.745px;">Display Account ID As</span>
<div class="abs inp" style="left:170px;top:223px;width:168.8px;height:28px;"></div>
<span class="t" style="left:176.20px;top:229.05px;font-size:13px;letter-spacing:-0.385px;">Concatenated String</span>
<svg class="abs" style="left:317px;top:233.5px;" width="12" height="8" viewBox="0 0 12 8"><path d="M1.600 1.600 L6 6 L10.400 1.600" fill="none" stroke="#5e5e5e" stroke-width="1.150"/></svg>
<div class="abs cb" style="left:66px;top:265.2px;width:15.5px;height:15.5px;"></div>
<span class="t" style="left:87.60px;top:265.05px;font-size:13px;letter-spacing:-0.377px;">Require 0 unexplained difference</span>
<div class="abs cb" style="left:66px;top:295.2px;width:15.5px;height:15.5px;"></div>
<span class="t" style="left:87.60px;top:295.05px;font-size:13px;letter-spacing:-0.384px;">Group Reconciliation</span>
<span class="t" style="left:41.00px;top:329.05px;font-size:13px;font-weight:700;color:#1b5ea7;letter-spacing:-0.648px;">Balance Summary</span>
<span class="t" style="left:161.90px;top:329.05px;font-size:13px;color:#175ea6;letter-spacing:-0.348px;">System Adjustments</span>
<span class="t" style="left:291.90px;top:329.05px;font-size:13px;color:#175ea6;letter-spacing:-0.368px;">Subsystem Adjustments</span>
<div class="abs" style="left:32px;top:354px;width:857.5px;height:365.5px;border:1px solid #d3dde5"></div>
<div class="abs" style="left:32px;top:351.5px;width:121px;height:3.3px;background:#0b5fc3"></div>
<div class="abs" style="left:43px;top:370.3px;width:836px;height:1px;background:#d5dfe7"></div>
<span class="t" style="left:48.00px;top:379.05px;font-size:14px;font-weight:700;color:#111;letter-spacing:-0.767px;">Column</span>
<span class="t" style="left:475.00px;top:379.05px;font-size:14px;font-weight:700;color:#111;letter-spacing:-0.513px;">Label</span>
<span class="t" style="left:806.30px;top:379.05px;font-size:14px;font-weight:700;color:#111;letter-spacing:-0.385px;">Hide</span>
<div class="abs" style="left:43px;top:404px;width:818px;height:1px;background:#d5dfe7"></div>
<div class="abs" style="left:33px;top:405px;width:855px;height:313.5px;overflow:hidden"><span class="t" style="left:15.00px;top:10.05px;font-size:13px;letter-spacing:-0.703px;">Source System</span>
<span class="t" style="left:99.80px;top:10.05px;font-size:13px;font-weight:700;color:#222;letter-spacing:-0.505px;">(Column)</span>
<div class="abs inp" style="left:442px;top:4px;width:299.5px;height:27.5px;"></div>
<span class="t" style="left:447.80px;top:11.05px;font-size:13px;letter-spacing:-0.588px;">General Ledger Balance</span>
<div class="abs rl" style="left:10px;top:36px;width:818px;height:1px;"></div>
<span class="t" style="left:15.00px;top:47.05px;font-size:13px;letter-spacing:-0.611px;">Subsystem</span>
<span class="t" style="left:79.60px;top:47.05px;font-size:13px;font-weight:700;color:#222;letter-spacing:-0.505px;">(Column)</span>
<div class="abs inp" style="left:442px;top:41px;width:299.5px;height:27.5px;"></div>
<span class="t" style="left:447.80px;top:48.05px;font-size:13px;letter-spacing:-0.654px;">AP Subledger Balance</span>
<div class="abs cb" style="left:777px;top:47px;width:15.5px;height:15.5px;"></div>
<div class="abs rl" style="left:10px;top:73px;width:818px;height:1px;"></div>
<span class="t" style="left:15.00px;top:84.05px;font-size:13px;letter-spacing:-0.455px;">Adjustments to Source System</span>
<span class="t" style="left:185.80px;top:84.05px;font-size:13px;font-weight:700;color:#222;letter-spacing:-0.361px;">(Tab)</span>
<div class="abs inp" style="left:442px;top:78px;width:299.5px;height:27.5px;"></div>
<span class="t" style="left:447.80px;top:85.05px;font-size:13px;letter-spacing:-0.412px;">Adjustments to General Ledger</span>
<div class="abs cb" style="left:777px;top:84px;width:15.5px;height:15.5px;"></div>
<div class="abs rl" style="left:10px;top:110px;width:818px;height:1px;"></div>
<span class="t" style="left:15.00px;top:121.05px;font-size:13px;letter-spacing:-0.392px;">Adjustments to Subsystem</span>
<span class="t" style="left:165.30px;top:121.05px;font-size:13px;font-weight:700;color:#222;letter-spacing:-0.361px;">(Tab)</span>
<div class="abs inp" style="left:442px;top:115px;width:299.5px;height:27.5px;"></div>
<span class="t" style="left:447.80px;top:122.05px;font-size:13px;letter-spacing:-0.392px;">Adjustments to Subsystem</span>
<div class="abs cb" style="left:777px;top:121px;width:15.5px;height:15.5px;"></div>
<div class="abs rl" style="left:10px;top:147px;width:818px;height:1px;"></div>
<span class="t" style="left:15.00px;top:158.05px;font-size:13px;letter-spacing:-0.457px;">Group Detail</span>
<span class="t" style="left:88.30px;top:158.05px;font-size:13px;font-weight:700;color:#222;letter-spacing:-0.361px;">(Tab)</span>
<div class="abs" style="left:442px;top:152px;width:299.5px;height:27.5px;background:#efeff0;border-radius:3px"></div>
<span class="t" style="left:447.80px;top:159.05px;font-size:13px;color:#9b9b9b;letter-spacing:-0.457px;">Group Detail</span>
<svg class="abs" style="left:782.5px;top:157.5px;" width="12" height="10" viewBox="0 0 12 10"><path d="M1.400 5.800 L4.200 8.600 L10.400 1" fill="none" stroke="#1f2a63" stroke-width="1.500"/></svg>
<div class="abs rl" style="left:10px;top:184px;width:818px;height:1px;"></div>
<span class="t" style="left:15.00px;top:195.05px;font-size:13px;letter-spacing:-0.466px;">Beginning Balance</span>
<div class="abs inp" style="left:442px;top:189px;width:299.5px;height:27.5px;"></div>
<span class="t" style="left:447.80px;top:196.05px;font-size:13px;letter-spacing:-0.466px;">Beginning Balance</span>
<div class="abs cb" style="left:777px;top:195px;width:15.5px;height:15.5px;"><svg class="abs" style="left:1.200px;top:1.800px" width="12" height="10" viewBox="0 0 12 10"><path d="M1.200 5.200 L4.400 8.400 L10.800 1.400" fill="none" stroke="#0b5fc3" stroke-width="2.300"/></svg></div>
<div class="abs rl" style="left:10px;top:221px;width:818px;height:1px;"></div>
<span class="t" style="left:15.00px;top:232.05px;font-size:13px;letter-spacing:-0.150px;">Net Activity</span>
<div class="abs inp" style="left:442px;top:226px;width:299.5px;height:27.5px;"></div>
<span class="t" style="left:447.80px;top:233.05px;font-size:13px;letter-spacing:-0.150px;">Net Activity</span>
<div class="abs cb" style="left:777px;top:232px;width:15.5px;height:15.5px;"><svg class="abs" style="left:1.200px;top:1.800px" width="12" height="10" viewBox="0 0 12 10"><path d="M1.200 5.200 L4.400 8.400 L10.800 1.400" fill="none" stroke="#0b5fc3" stroke-width="2.300"/></svg></div>
<div class="abs rl" style="left:10px;top:258px;width:818px;height:1px;"></div>
<span class="t" style="left:15.00px;top:269.05px;font-size:13px;letter-spacing:-0.541px;">Ending Balance</span>
<div class="abs inp" style="left:442px;top:263px;width:299.5px;height:27.5px;"></div>
<span class="t" style="left:447.80px;top:270.05px;font-size:13px;letter-spacing:-0.541px;">Ending Balance</span>
<div class="abs cb" style="left:777px;top:269px;width:15.5px;height:15.5px;"></div>
<div class="abs rl" style="left:10px;top:295px;width:818px;height:1px;"></div>
<span class="t" style="left:15.00px;top:306.05px;font-size:13px;letter-spacing:-0.401px;">Difference</span>
<div class="abs inp" style="left:442px;top:300px;width:299.5px;height:27.5px;"></div>
<span class="t" style="left:447.80px;top:307.05px;font-size:13px;letter-spacing:-0.401px;">Difference</span>
<div class="abs cb" style="left:777px;top:306px;width:15.5px;height:15.5px;"></div>
<div class="abs rl" style="left:10px;top:332px;width:818px;height:1px;"></div>
</div>
<div class="abs" style="left:863px;top:405px;width:15.8px;height:313.8px;background:#f1f1f1"></div>
<div class="abs" style="left:864px;top:422px;width:12.8px;height:212.5px;background:#bfbfc0"></div>
<svg class="abs" style="left:866px;top:411px;" width="10" height="6" viewBox="0 0 10 6"><path d="M0.800 5.400 L5 1 L9.200 5.400 Z" fill="#a3a3a3"/></svg>

</div>
<div id="botline"></div>
</body>
</html>
